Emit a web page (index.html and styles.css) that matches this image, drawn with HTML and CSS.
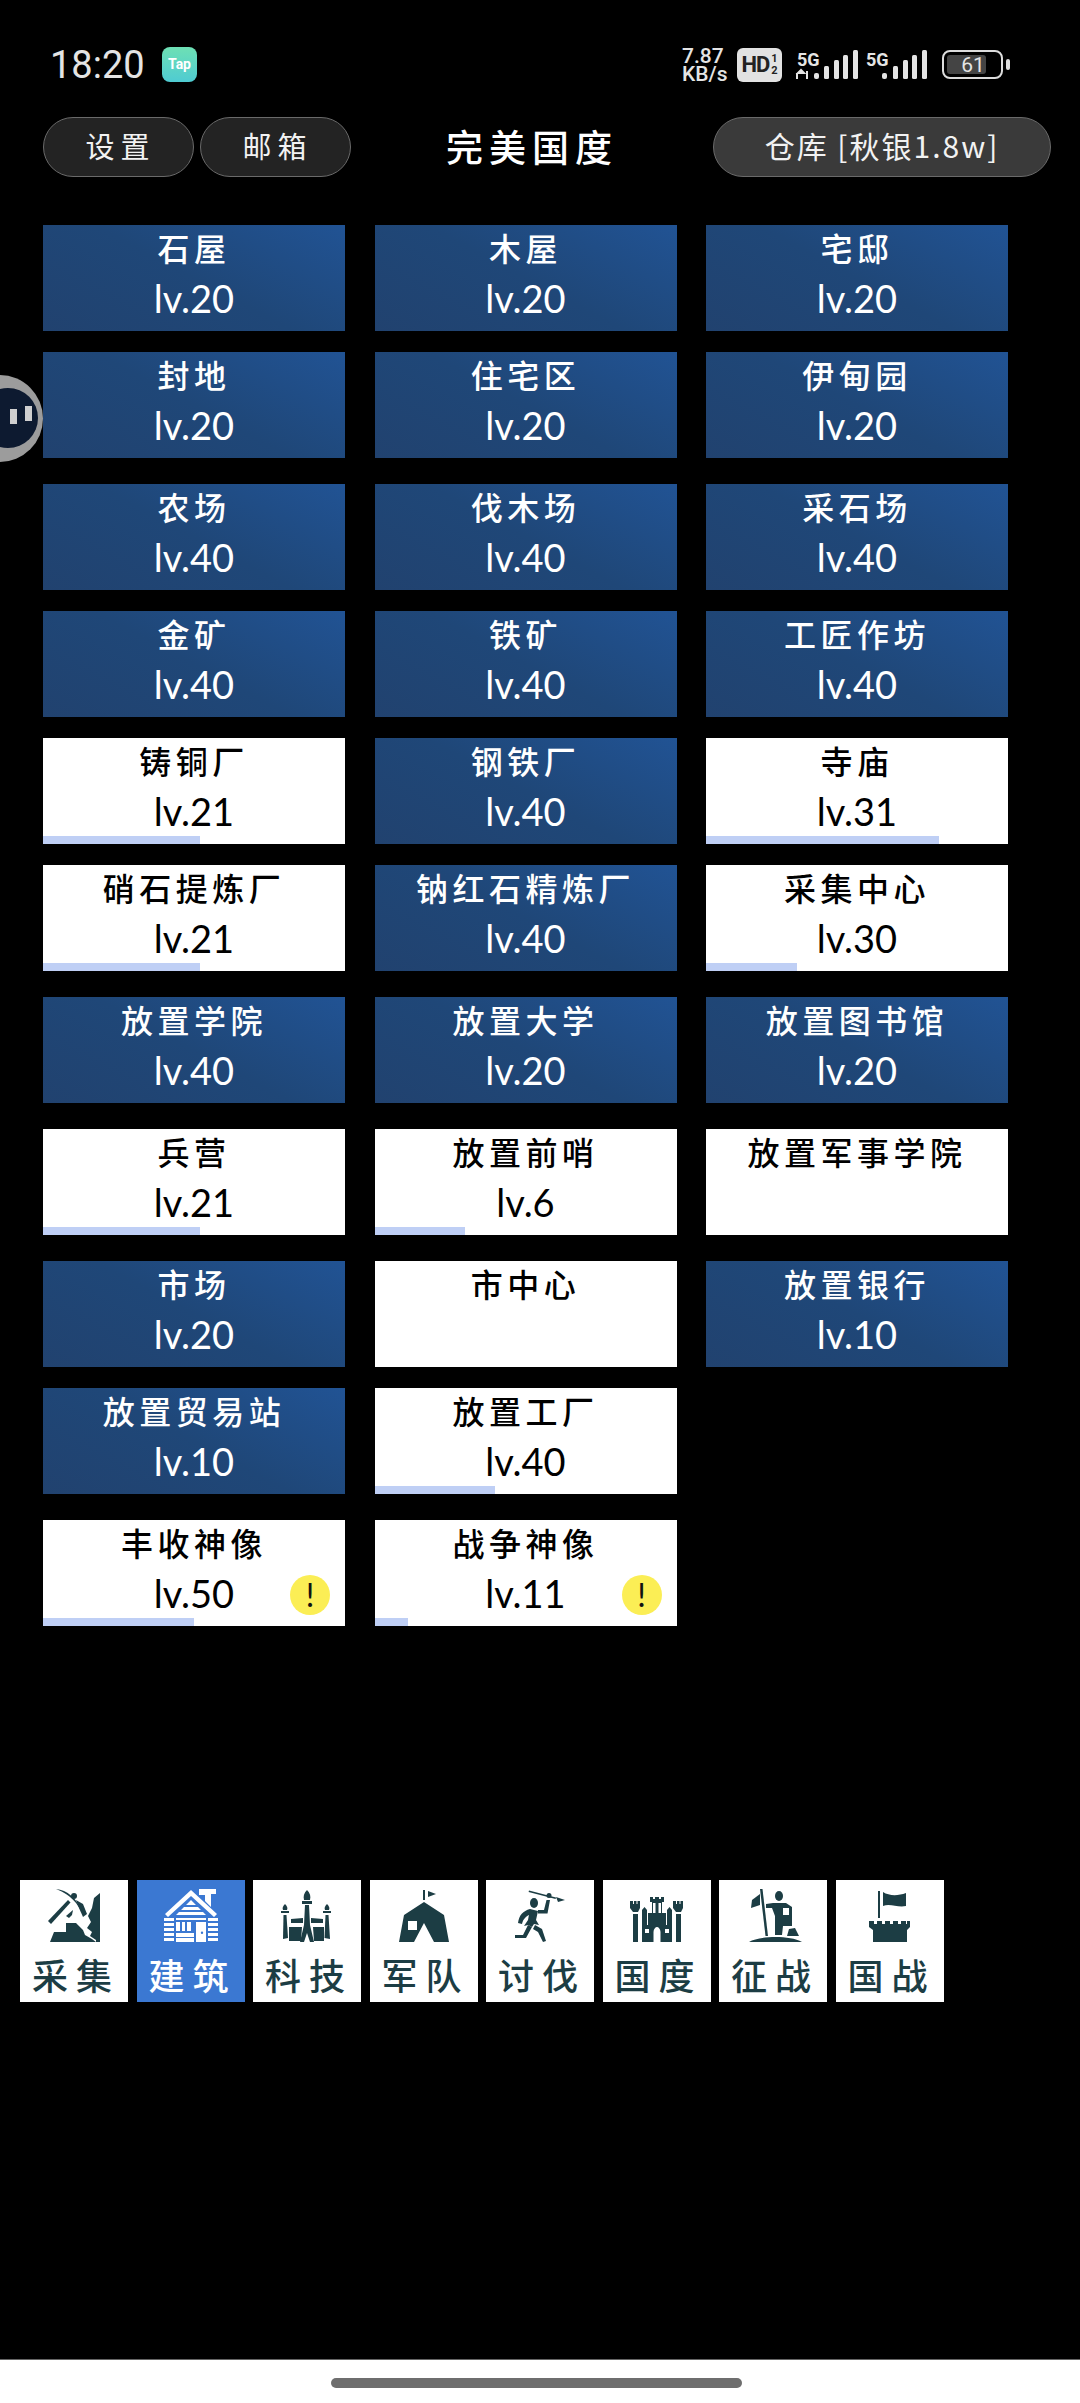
FILE: index.html
```html
<!DOCTYPE html>
<html lang="zh">
<head>
<meta charset="utf-8">
<title>完美国度</title>
<link rel="stylesheet" href="styles.css">
</head>
<body>
<div class="page">
  <div class="status">
    <span class="time">18:20</span>
    <span class="tap">Tap</span>
    <div class="status-right">
      <span class="speed">7.87<br>KB/s</span>
      <span class="hd"><b>HD</b><i>1<br>2</i></span>
      <svg class="sig sig-a" viewBox="0 0 66 32"><text x="3" y="17" class="sig-t">5G</text><path class="sig-b" d="M3 24v6M7 21l-3 3h6zM13 22v8"/><rect x="20" y="24" width="5" height="6" rx="2"/><rect x="30" y="17" width="5" height="13" rx="1.5"/><rect x="40" y="11" width="5" height="19" rx="1.5"/><rect x="49" y="6" width="5" height="24" rx="1.5"/><rect x="59" y="1" width="5" height="29" rx="1.5"/></svg>
      <svg class="sig sig-b2" viewBox="0 0 64 32"><text x="1" y="17" class="sig-t">5G</text><rect x="17" y="24" width="5" height="6" rx="2"/><rect x="28" y="17" width="5" height="13" rx="1.5"/><rect x="38" y="11" width="5" height="19" rx="1.5"/><rect x="47" y="6" width="5" height="24" rx="1.5"/><rect x="57" y="1" width="5" height="29" rx="1.5"/></svg>
      <svg class="batt" viewBox="0 0 68 30"><rect x="1" y="1" width="59" height="27" rx="7" class="batt-o"/><rect x="5" y="5" width="39" height="19" rx="3" class="batt-f"/><rect x="64" y="9" width="4" height="11" rx="2" class="batt-n"/><text x="31" y="22" class="batt-t" text-anchor="middle">61</text></svg>
    </div>
  </div>

  <header class="head">
    <button class="pill">设置</button>
    <button class="pill">邮箱</button>
    <h1 class="title">完美国度</h1>
    <button class="pill pill-wide">仓库 [秋银1.8w]</button>
  </header>

  <main class="groups">
    <section class="group">
      <div class="card done"><div class="nm">石屋</div><div class="lv">lv.20</div></div>
      <div class="card done"><div class="nm">木屋</div><div class="lv">lv.20</div></div>
      <div class="card done"><div class="nm">宅邸</div><div class="lv">lv.20</div></div>
      <div class="card done"><div class="nm">封地</div><div class="lv">lv.20</div></div>
      <div class="card done"><div class="nm">住宅区</div><div class="lv">lv.20</div></div>
      <div class="card done"><div class="nm">伊甸园</div><div class="lv">lv.20</div></div>
    </section>
    <section class="group">
      <div class="card done"><div class="nm">农场</div><div class="lv">lv.40</div></div>
      <div class="card done"><div class="nm">伐木场</div><div class="lv">lv.40</div></div>
      <div class="card done"><div class="nm">采石场</div><div class="lv">lv.40</div></div>
      <div class="card done"><div class="nm">金矿</div><div class="lv">lv.40</div></div>
      <div class="card done"><div class="nm">铁矿</div><div class="lv">lv.40</div></div>
      <div class="card done"><div class="nm">工匠作坊</div><div class="lv">lv.40</div></div>
      <div class="card"><div class="nm">铸铜厂</div><div class="lv">lv.21</div><div class="bar" style="width:52%"></div></div>
      <div class="card done"><div class="nm">钢铁厂</div><div class="lv">lv.40</div></div>
      <div class="card"><div class="nm">寺庙</div><div class="lv">lv.31</div><div class="bar" style="width:77%"></div></div>
      <div class="card"><div class="nm">硝石提炼厂</div><div class="lv">lv.21</div><div class="bar" style="width:52%"></div></div>
      <div class="card done"><div class="nm">钠红石精炼厂</div><div class="lv">lv.40</div></div>
      <div class="card"><div class="nm">采集中心</div><div class="lv">lv.30</div><div class="bar" style="width:30%"></div></div>
    </section>
    <section class="group">
      <div class="card done"><div class="nm">放置学院</div><div class="lv">lv.40</div></div>
      <div class="card done"><div class="nm">放置大学</div><div class="lv">lv.20</div></div>
      <div class="card done"><div class="nm">放置图书馆</div><div class="lv">lv.20</div></div>
    </section>
    <section class="group">
      <div class="card"><div class="nm">兵营</div><div class="lv">lv.21</div><div class="bar" style="width:52%"></div></div>
      <div class="card"><div class="nm">放置前哨</div><div class="lv">lv.6</div><div class="bar" style="width:30%"></div></div>
      <div class="card"><div class="nm">放置军事学院</div></div>
    </section>
    <section class="group">
      <div class="card done"><div class="nm">市场</div><div class="lv">lv.20</div></div>
      <div class="card"><div class="nm">市中心</div></div>
      <div class="card done"><div class="nm">放置银行</div><div class="lv">lv.10</div></div>
      <div class="card done"><div class="nm">放置贸易站</div><div class="lv">lv.10</div></div>
      <div class="card"><div class="nm">放置工厂</div><div class="lv">lv.40</div><div class="bar" style="width:40%"></div></div>
    </section>
    <section class="group">
      <div class="card"><div class="nm">丰收神像</div><div class="lv">lv.50</div><div class="bar" style="width:50%"></div><span class="alert">!</span></div>
      <div class="card"><div class="nm">战争神像</div><div class="lv">lv.11</div><div class="bar" style="width:11%"></div><span class="alert">!</span></div>
    </section>
  </main>

  <nav class="nav">
    <div class="tile">
      <svg class="ico" viewBox="0 0 108 66"><path d="M30 62L34 52H46V43H56L63 50L65 55L72 59L76 62Z"/><path d="M80 13L74 18L72 28L68 36L71 42L67 48L72 52L70 56L76 60V62H80Z"/><path d="M36 9C47 10 57 18 62 32L56 23C50 16 44 12 36 9Z"/><path d="M28 41L48 20L50.500 22.500L31 44Z"/><circle cx="54" cy="16" r="3"/><path d="M46 36L53 30L52 35L49 38Z"/><path d="M56 20L63 24L67 34L63 37L59 28Z"/></svg>
      <span class="lab">采集</span>
    </div>
    <div class="tile on">
      <svg class="ico" viewBox="0 0 108 66"><path d="M54 10L80 34L77 37L54 16L31 37L28 34Z"/><path d="M62 9H79V14H74V27L68 21V15H62Z"/><path d="M54 20L59 25H49ZM47 27H61L64 30H44ZM42 32H66L69 35H39Z"/><path d="M27 38H37V41H27ZM27 43H37V46H27ZM27 48H37V51H27ZM27 53H37V56H27ZM27 58H37V61H27Z"/><path d="M71 38H81V41H71ZM71 43H81V46H71ZM71 48H81V51H71ZM71 53H81V56H71ZM71 58H81V61H71Z"/><path d="M39 38H69V40H39ZM39 42H43V51H39ZM45 42H48V51H45ZM50 42H54V51H50ZM39 53H57V57H39ZM39 58H57V62H39Z"/><path fill-rule="evenodd" d="M59 42H69V62H59ZM65 51.500A1.200 1.200 0 1 0 65 53.900A1.200 1.200 0 1 0 65 51.500Z"/></svg>
      <span class="lab">建筑</span>
    </div>
    <div class="tile">
      <svg class="ico" viewBox="0 0 108 66"><path d="M54 10C57 13 58 16 57 20H51C50 16 51 13 54 10Z"/><rect x="49" y="21" width="10" height="3"/><path d="M52 25H56L57 45L61 62H57L54 53L51 62H47L51 45Z"/><path d="M32 24C34 26 35 28 34 30H30C29 28 30 26 32 24Z"/><rect x="28" y="31" width="8" height="2"/><path d="M30.500 35H33.500L35 58L30 59Z"/><path d="M74 24C76 26 77 28 76 30H72C71 28 72 26 74 24Z"/><rect x="70" y="31" width="8" height="2"/><path d="M72.500 35H75.500L77 59L71.500 58Z"/><path d="M38 39L50 38V43H38ZM58 38L70 39V43H58Z"/><path d="M36 47H49L48 61H36ZM60 47H71V61H61Z"/></svg>
      <span class="lab">科技</span>
    </div>
    <div class="tile">
      <svg class="ico" viewBox="0 0 108 66"><rect x="53" y="10" width="2" height="10"/><path d="M58 11L66 14L58 17Z"/><path fill-rule="evenodd" d="M54 22L74 35L79 62H64L54 43L44 62H29L34 35ZM38 41V50H47V41Z"/></svg>
      <span class="lab">军队</span>
    </div>
    <div class="tile">
      <svg class="ico" viewBox="0 0 108 66"><path d="M43 10.500L70 17.500L69.600 19L42.600 12Z"/><path d="M70 17L79 20L72 22Z"/><circle cx="63" cy="15.500" r="2.500"/><ellipse cx="48" cy="23" rx="4" ry="5"/><path d="M52 30H58L60.500 20H64L61.500 33.500H52Z"/><path d="M44 29C37 31 33 35 32 43L36 44C37 39 40 36 45 34Z"/><path d="M44 29L52 31L50 40L53 45L48 44L46 47L42 45L38 46L42 40Z"/><path d="M42 45L46 47L40 58H29V55H37Z"/><path d="M49 45L56 49L60 61L57 62L52 52L47 49Z"/></svg>
      <span class="lab">讨伐</span>
    </div>
    <div class="tile">
      <svg class="ico" viewBox="0 0 108 66"><path d="M27 21H30V24H31V21H33.500V24H34.500V21H37V28L35 32H30L27 28Z"/><rect x="30" y="34" width="5" height="28"/><path d="M70 21H73V24H74V21H76.500V24H77.500V21H80V28L78 32H73L70 28Z"/><rect x="73" y="34" width="5" height="28"/><path fill-rule="evenodd" d="M41.500 27L44 30V45H45V33H49V22H47V17H50V19H52V17H56V19H58V17H61V22H59V33H63V45H64V30L66.500 27L69 30V62H39V30ZM50 23V33H52.500V23ZM55.500 23V33H58V23ZM42 49V53H46V49ZM62 49V53H66V49ZM50.500 62H57.500V52C57.500 49 55.500 47 54 47C52.500 47 50.500 49 50.500 52Z"/></svg>
      <span class="lab">国度</span>
    </div>
    <div class="tile">
      <svg class="ico" viewBox="0 0 108 66"><path d="M30 62C40 56 70 55 83 62Z"/><path d="M41 9H43.500L49 56H46.500Z"/><path d="M41 14L33 20L32 28L41 25Z"/><ellipse cx="60" cy="16" rx="4" ry="5"/><path fill-rule="evenodd" d="M47 24L54 23H67L73 27V46H64L63 55H56V36L53 28L47 28ZM64 28V35H70V28Z"/><path d="M68 56L70 49L76 48L80 56Z"/></svg>
      <span class="lab">征战</span>
    </div>
    <div class="tile">
      <svg class="ico" viewBox="0 0 108 66"><rect x="42" y="11" width="2" height="27"/><path d="M47 12C53 16 62 16 70 13V26C62 28 54 23 47 26Z"/><path d="M33 41H38V44H41V41H46V44H49V41H54V44H57V41H62V44H65V41H70V44H71V41H74V47L71 50V62H37V50L33 47Z"/></svg>
      <span class="lab">国战</span>
    </div>
  </nav>

  <div class="homebar"><span class="pillbar"></span></div>

  <div class="float">
    <span class="float-core"></span>
    <span class="float-eye eye-a"></span>
    <span class="float-eye eye-b"></span>
  </div>
</div>
</body>
</html>
```
FILE: styles.css
```css
* { box-sizing: border-box; }
html, body { margin: 0; padding: 0; background: #000; }
.page {
  position: relative;
  width: 1080px;
  height: 2403px;
  overflow: hidden;
  display: flex;
  flex-direction: column;
  background: #000;
  color: #fff;
  font-family: Lato, "Noto Sans CJK SC", sans-serif;
}

/* status bar */
.status {
  display: flex;
  align-items: center;
  height: 117px;
  padding: 12px 70px 0 50px;
}
.time {
  font-family: Roboto, sans-serif;
  font-size: 38px;
  color: #e4e4e4;
  width: 112px;
}
.tap {
  width: 35px;
  height: 35px;
  border-radius: 8px;
  background: linear-gradient(180deg, #6ee0b4, #4fcbd2);
  color: #fff;
  font: 700 14px/35px Roboto, sans-serif;
  text-align: center;
}
.status-right {
  margin-left: auto;
  display: flex;
  align-items: center;
}
.speed {
  width: 55px;
  font: 500 21px/18px Roboto, sans-serif;
  color: #e4e4e4;
}
.hd {
  display: flex;
  align-items: center;
  justify-content: center;
  width: 45px;
  height: 34px;
  border-radius: 6px;
  background: #e2e2e2;
  color: #222;
  font-family: Roboto, sans-serif;
}
.hd b { font-size: 22px; font-weight: 700; letter-spacing: -1px; }
.hd i { font-style: normal; font-weight: 700; font-size: 11px; line-height: 12px; margin-left: 2px; }
.sig { fill: #e4e4e4; height: 32px; overflow: visible; }
.sig-a { width: 66px; margin-left: 12px; }
.sig-b2 { width: 64px; margin-left: 5px; }
.sig-t { font: 700 18px Roboto, sans-serif; }
.sig-b { stroke: #e4e4e4; stroke-width: 2; }
.batt { width: 68px; height: 30px; margin-left: 13px; }
.batt-o { fill: none; stroke: #dcdcdc; stroke-width: 2; }
.batt-f { fill: #444; }
.batt-n { fill: #dcdcdc; }
.batt-t { font: 400 21px Roboto, sans-serif; fill: #e4e4e4; }

/* header */
.head {
  display: flex;
  align-items: center;
  height: 60px;
  padding: 0 29px 0 43px;
  gap: 6px;
}
.pill {
  width: 151px;
  height: 60px;
  padding: 0 0 4px 4px;
  border: 1px solid #6a6a6a;
  border-radius: 30px;
  background: #232323;
  color: #f2f2f2;
  font-family: "Noto Sans CJK SC", sans-serif;
  font-size: 29px;
  letter-spacing: 6px;
}
.pill-wide {
  width: 338px;
  background: #3a3a3a;
  letter-spacing: 2px;
  font-size: 30px;
  padding: 0 0 4px;
}
.title {
  flex: 1;
  margin: 0 0 3px;
  text-align: center;
  font-family: "Noto Sans CJK SC", sans-serif;
  font-size: 37px;
  font-weight: 500;
  letter-spacing: 6px;
  color: #fff;
}

/* building grid */
.groups {
  display: flex;
  flex-direction: column;
  gap: 26px;
  margin-top: 48px;
  padding-left: 43px;
}
.group {
  display: grid;
  grid-template-columns: repeat(3, 302px);
  grid-auto-rows: 106px;
  column-gap: 29.500px;
  row-gap: 21px;
}
.card {
  position: relative;
  background: #fff;
  color: #000;
  text-align: center;
  padding-top: 1px;
  overflow: hidden;
}
.card.done {
  background: linear-gradient(28deg, #21426f 0%, #1f4778 50%, #215394 100%);
  color: #fff;
}
.nm {
  font-family: "Noto Sans CJK SC", sans-serif;
  font-size: 32px;
  font-weight: 500;
  line-height: 42px;
  letter-spacing: 4.500px;
}
.lv {
  font-family: Lato, sans-serif;
  font-size: 38px;
  line-height: 50px;
  margin-top: 5px;
}
.bar {
  position: absolute;
  left: 0;
  bottom: 0;
  height: 8px;
  background: #bfcff5;
}
.alert {
  position: absolute;
  right: 15px;
  top: 55px;
  width: 40px;
  height: 40px;
  border-radius: 50%;
  background: #fbee55;
  color: #111;
  font: 400 32px/40px Lato, sans-serif;
  text-align: center;
}

/* bottom nav */
.nav {
  display: flex;
  gap: 8.500px;
  margin-top: 254px;
  padding-left: 20px;
}
.tile {
  width: 108px;
  height: 122px;
  background: #fff;
  color: #1c3d44;
  display: flex;
  flex-direction: column;
  align-items: center;
}
.tile.on { background: #3b78d2; color: #fff; }
.ico { display: block; width: 108px; height: 66px; fill: currentColor; flex: none; }
.lab {
  font-family: "Noto Sans CJK SC", sans-serif;
  font-weight: 500;
  font-size: 36px;
  line-height: 50px;
  letter-spacing: 8px;
  margin: 3px 0 0 4px;
}

/* home indicator */
.homebar {
  margin-top: auto;
  height: 44px;
  background: #fff;
  border-top: 1px solid #666;
  display: flex;
  justify-content: center;
  padding: 18px 7px 0 0;
}
.pillbar {
  width: 411px;
  height: 10px;
  border-radius: 5px;
  background: #6e6e6e;
}

/* floating widget */
.float {
  position: absolute;
  left: -44px;
  top: 375px;
  width: 87px;
  height: 87px;
  border-radius: 50%;
  background: #9c9c9c;
}
.float-core {
  position: absolute;
  left: 22px;
  top: 13px;
  width: 60px;
  height: 60px;
  border-radius: 50%;
  background: #0d1a30;
}
.float-eye {
  position: absolute;
  width: 7px;
  height: 15px;
  background: #cfcfcf;
}
.eye-a { left: 54px; top: 34px; }
.eye-b { left: 69px; top: 31px; }
```
